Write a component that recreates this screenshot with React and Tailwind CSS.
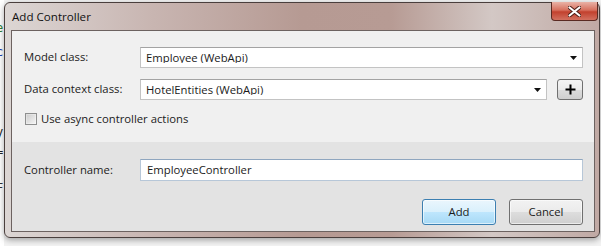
const ui = "font-['Open_Sans',sans-serif] text-[11.3px] text-[#1b1b1b]"

function Arrow() {
  return (
    <svg width="7" height="4" viewBox="0 0 7 4" className="shrink-0">
      <path d="M0 0h7L3.5 4z" fill="#111" />
    </svg>
  )
}

function Combo({ value, className }) {
  return (
    <div className={`flex items-center h-[21px] bg-white border border-[#c3c3c3] border-t-[#a3a3a3] pl-[5px] pr-[5px] ${className}`}>
      <span className="flex-1 truncate leading-none">{value}</span>
      <Arrow />
    </div>
  )
}

function Row({ label, children }) {
  return (
    <div className="flex items-center">
      <div className="w-[116px] shrink-0">{label}</div>
      {children}
    </div>
  )
}

export default function App() {
  return (
    <div className={`${ui} w-[601px] h-[246px] bg-[#f3f3f3] flex overflow-hidden`}>
      {/* sliver of the editor behind the dialog */}
      <div className="w-[4px] shrink-0 bg-white overflow-hidden font-['DejaVu_Sans_Mono',monospace] text-[12px] leading-none">
        <div className="h-[22px]" />
        <div className="-ml-[4px] text-[#2e7d32]">e</div>
        <div className="h-[12px]" />
        <div className="-ml-[4px] text-[#1f3fb0]">c</div>
        <div className="h-[68px]" />
        <div className="-ml-[4px] text-[#222]">y</div>
        <div className="h-[8px]" />
        <div className="-ml-[4px] text-[#222]">=</div>
        <div className="h-[24px]" />
        <div className="-ml-[4px] text-[#333]">F</div>
      </div>

      {/* window */}
      <div className="mt-[2px] w-[596px] h-[236px] shrink-0 flex flex-col rounded-[6px] border border-[#4a3f3d] bg-[linear-gradient(to_right,#dcd6d4_0%,#c8b5b1_25%,#b69a93_50%,#b79b94_65%,#d3c8c5_82%,#c0a9a4_100%)] shadow-[0_2px_6px_rgba(0,0,0,0.35)]">
        {/* title bar */}
        <div className="h-[27px] flex items-start shrink-0">
          <div className="pl-[7px] pt-[5px] text-[11.6px] text-[#111] flex-1">Add Controller</div>
          <div className="-mt-[1px] mr-[1px] w-[47px] h-[19px] rounded-b-[4px] border border-[#5a2a22] border-t-0 bg-[linear-gradient(to_bottom,#e9b2a6_0%,#d7705e_45%,#c2412e_55%,#d2705f_100%)] flex items-center justify-center">
            <svg width="13" height="11" viewBox="0 0 13 11">
              <path d="M1.5 1.5l10 8M11.5 1.5l-10 8" stroke="#4a1c14" strokeWidth="4" strokeLinecap="round" />
              <path d="M1.5 1.5l10 8M11.5 1.5l-10 8" stroke="#fff" strokeWidth="2.2" strokeLinecap="round" />
            </svg>
          </div>
        </div>

        {/* client area */}
        <div className="ml-[6px] mr-[4px] h-[202px] shrink-0 border border-[#6c6260] flex flex-col">
          <div className="h-[111px] bg-[#f0f0f0] pt-[16px] pl-[12px] pr-[11px] flex flex-col">
            <Row label="Model class:">
              <Combo value="Employee (WebApi)" className="flex-1" />
            </Row>
            <div className="h-[11px]" />
            <Row label="Data context class:">
              <Combo value="HotelEntities (WebApi)" className="flex-1" />
              <div className="ml-[10px] w-[26px] h-[21px] rounded-[3px] border border-[#707070] bg-[linear-gradient(to_bottom,#f4f4f4_0%,#ebebeb_50%,#dcdcdc_51%,#cfcfcf_100%)] flex items-center justify-center">
                <svg width="11" height="11" viewBox="0 0 11 11">
                  <path d="M5.5 0.5v10M0.5 5.5h10" stroke="#000" strokeWidth="2" />
                </svg>
              </div>
            </Row>
            <div className="h-[13px]" />
            <div className="flex items-center pl-[1px]">
              <div className="w-[12px] h-[12px] border border-[#8e8f8f] bg-[linear-gradient(135deg,#dcdcdc,#f8f8f8)] p-[1px]">
                <div className="w-full h-full bg-[linear-gradient(135deg,#cfcfcf,#f2f2f2)]" />
              </div>
              <span className="ml-[4px] leading-none">Use async controller actions</span>
            </div>
          </div>

          <div className="flex-1 bg-[#e3e3e3] pt-[17px] pl-[12px] pr-[11px] flex flex-col">
            <Row label="Controller name:">
              <div className="flex-1 h-[22px] bg-white border border-[#b7c7d8] border-t-[#8fa6bf] pl-[6px] flex items-center leading-none">
                EmployeeController
              </div>
            </Row>
            <div className="h-[18px]" />
            <div className="flex justify-end gap-[13px]">
              <button className="w-[74px] h-[26px] rounded-[3px] border border-[#3c7fb1] bg-[linear-gradient(to_bottom,#eaf6fd_0%,#d9f0fc_50%,#bee6fd_51%,#a7d9f5_100%)] shadow-[inset_0_0_0_1px_rgba(255,255,255,0.6)] leading-none">
                Add
              </button>
              <button className="w-[74px] h-[26px] rounded-[3px] border border-[#707070] bg-[linear-gradient(to_bottom,#f2f2f2_0%,#ebebeb_50%,#dddddd_51%,#cfcfcf_100%)] shadow-[inset_0_0_0_1px_rgba(255,255,255,0.6)] leading-none">
                Cancel
              </button>
            </div>
          </div>
        </div>
      </div>
    </div>
  )
}
